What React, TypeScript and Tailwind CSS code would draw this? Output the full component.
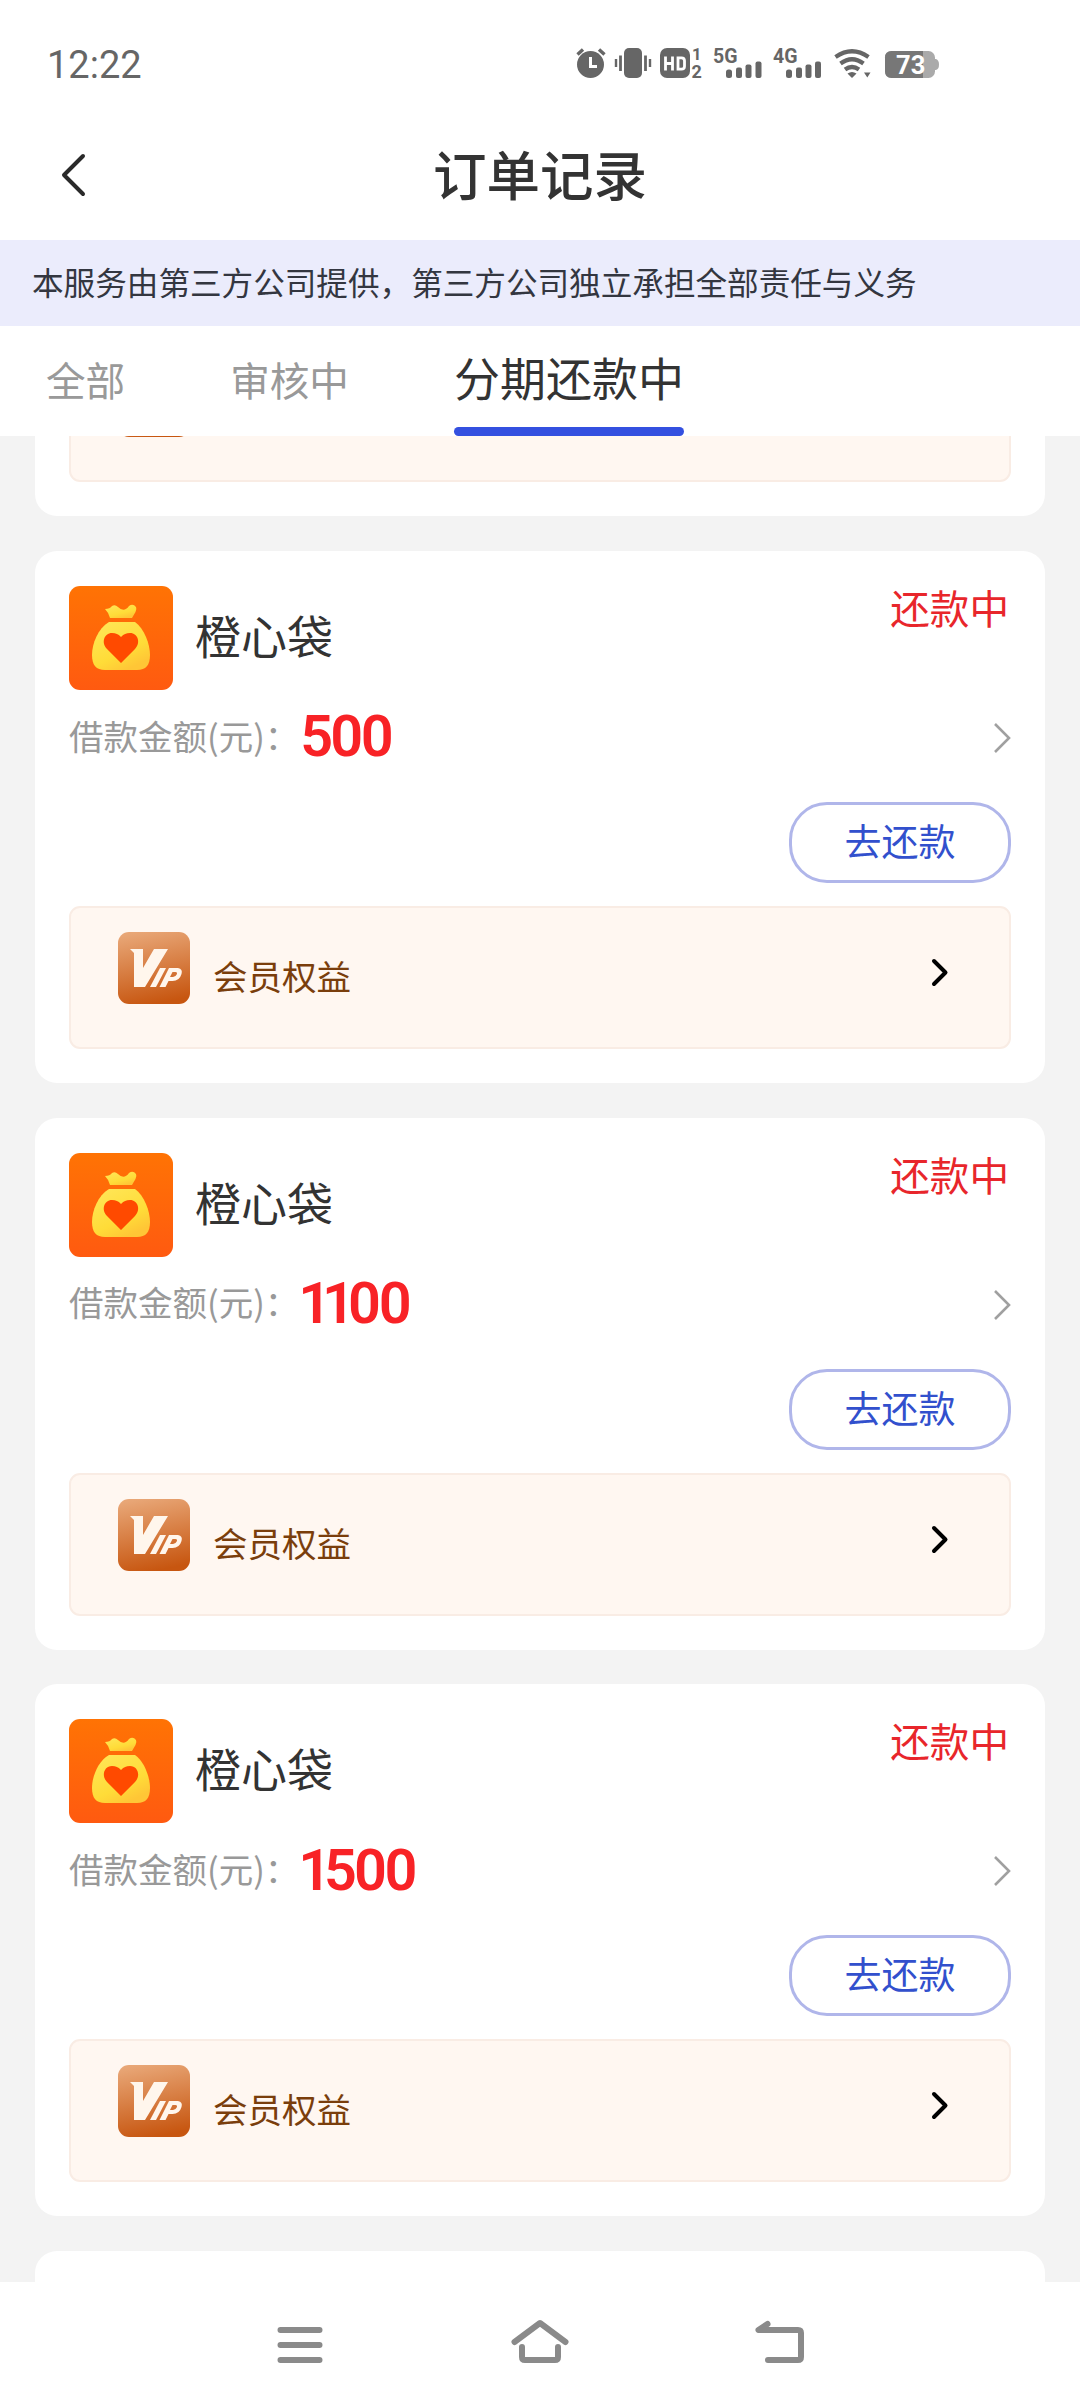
import { ReactNode } from "react";

const orders = [
  { id: 1, name: "橙心袋", amount: "500", status: "还款中" },
  { id: 2, name: "橙心袋", amount: "500", status: "还款中" },
  { id: 3, name: "橙心袋", amount: "1100", status: "还款中" },
  { id: 4, name: "橙心袋", amount: "1500", status: "还款中" },
  { id: 5, name: "橙心袋", amount: "500", status: "还款中" },
];

const tabs = ["全部", "审核中", "分期还款中"];

function StatusIcons() {
  return (
    <svg width="370" height="40" viewBox="0 0 370 40" fill="#666">
      {/* alarm */}
      <circle cx="16.5" cy="19.5" r="13.5" />
      <path d="M3.5 9.5 9 4.5M30.5 9.5 25 4.5" stroke="#666" strokeWidth="3.4" />
      <path d="M16.5 12v9.5h6.5" fill="none" stroke="#fff" strokeWidth="3" />
      {/* vibrate */}
      <rect x="50" y="3" width="18" height="30" rx="5" />
      <path d="M46.5 10.5v15.5M71.5 10.5v15.5" stroke="#666" strokeWidth="2.8" />
      <path d="M42 14v8M76 14v8" stroke="#666" strokeWidth="2.4" />
      {/* hd */}
      <rect x="86" y="3" width="30" height="30" rx="7" />
      <path d="M91.5 11.5v14M98.5 11.5v14M91.5 18.5h7" fill="none" stroke="#fff" strokeWidth="2.8" />
      <path d="M104 12.8h3.5q3 0 3 3v5.4q0 3-3 3H104z" fill="none" stroke="#fff" strokeWidth="2.8" />
      <text x="118" y="14.5" fontSize="16.5" fontWeight="700" fontFamily="Roboto, sans-serif">1</text>
      <text x="117.5" y="32.5" fontSize="18" fontWeight="700" fontFamily="Roboto, sans-serif">2</text>
      {/* sim 1 */}
      <text x="139" y="17.5" fontSize="19.5" fontWeight="700" fontFamily="Roboto, sans-serif">5G</text>
      <rect x="152" y="24.5" width="6" height="8.5" rx="2.5" />
      <rect x="162" y="22.5" width="6" height="10.5" rx="2" />
      <rect x="171.5" y="19.5" width="6" height="13.5" rx="2" />
      <rect x="181.5" y="16.5" width="6" height="16.5" rx="2" />
      {/* sim 2 */}
      <text x="199" y="17.5" fontSize="19.5" fontWeight="700" fontFamily="Roboto, sans-serif">4G</text>
      <rect x="212" y="24.5" width="6" height="8.5" rx="2.5" />
      <rect x="222" y="22.5" width="6" height="10.5" rx="2" />
      <rect x="231.5" y="19.5" width="6" height="13.5" rx="2" />
      <rect x="241" y="16.5" width="6" height="16.5" rx="2" />
      {/* wifi */}
      <g fill="none" stroke="#666" strokeWidth="4.2">
        <path d="M261.5 12q16.5-11.5 33 0" />
        <path d="M266.5 18.5q11.5-8.5 23 0" />
        <path d="M271 24.5q7-5 14 0" />
      </g>
      <path d="M273.5 28.5q4.5-3 9 0L278 33zM290 27.5h6.5l-3.2 5z" />
      {/* battery */}
      <rect x="311" y="6" width="50" height="27" rx="6.5" fill="#aaa" />
      <path d="M360 14h2q3 1 3 5.5t-3 5.5h-2z" fill="#aaa" />
      <path d="M317.5 6H349v27h-31.5q-6.5 0-6.5-6.5v-14q0-6.5 6.5-6.5z" fill="#777" />
      <text x="322" y="28.5" fontSize="25.5" fontWeight="700" fill="#fff" fontFamily="Roboto, sans-serif">73</text>
    </svg>
  );
}

function MoneyBag() {
  return (
    <svg width="104" height="104" viewBox="0 0 104 104">
      <defs>
        <linearGradient id="bagBg" x1="0" y1="0" x2="0" y2="1">
          <stop offset="0" stopColor="#ff7304" />
          <stop offset="1" stopColor="#ff5a10" />
        </linearGradient>
        <linearGradient id="bagFill" x1="0" y1="0" x2="0.6" y2="1">
          <stop offset="0" stopColor="#ffe75a" />
          <stop offset="0.7" stopColor="#ffdc38" />
          <stop offset="1" stopColor="#ffc636" />
        </linearGradient>
      </defs>
      <rect width="104" height="104" rx="11" fill="url(#bagBg)" />
      <path d="M36 23q5 0 7-3 3-2 6 1 6 6 11-1 4-3 7 1 1 2-.5 5L63 32H41q-1-5-5-9z" fill="url(#bagFill)" />
      <path d="M40 36h26c9 6 15 22 15 33 0 10-4 15-13 15H36c-9 0-13-5-13-15 0-11 6-27 17-33z" fill="url(#bagFill)" />
      <path d="M52 77 38 63c-6-6-3-16 5-16 4 0 6 1 9 4 3-3 5-4 9-4 8 0 11 10 5 16z" fill="#ff4a00" />
    </svg>
  );
}

function VipIcon() {
  return (
    <svg width="72" height="72" viewBox="0 0 72 72">
      <defs>
        <linearGradient id="vipBg" x1="0.3" y1="0" x2="0.5" y2="1">
          <stop offset="0" stopColor="#e8a676" />
          <stop offset="1" stopColor="#c75610" />
        </linearGradient>
      </defs>
      <rect width="72" height="72" rx="11" fill="url(#vipBg)" />
      <g fill="#fff6ec">
        <path d="M12 17h13v19l11-19h14L27 55H16V21z" />
        <path d="M42 36h6L38 55h-6z" />
        <path fillRule="evenodd" d="M51 36h9q5 1 3.5 6-2 7-9 7h-4l-3 6h-6zM54.5 40l-2.5 5h3q3-.5 4-3 .5-2-1.5-2z" />
      </g>
    </svg>
  );
}

function OrderCard({ name, amount, status }: { name: string; amount: string; status: string }) {
  return (
    <div className="h-[532px] shrink-0 rounded-[22px] bg-white px-[34px] pt-[35px]">
      <div className="flex h-[104px] items-start">
        <MoneyBag />
        <span className="ml-[22px] mt-[14px] text-[46px] leading-[68px] text-[#333]">{name}</span>
        <span className="-mt-[8px] ml-auto mr-[2px] text-[39.6px] leading-[58px] text-[#e8262b]">{status}</span>
      </div>
      <div className="flex h-[96px] items-center">
        <span className="-mt-[5px] whitespace-nowrap text-[34.5px] text-[#999]">借款金额(元)：</span>
        <span className="-mt-px ml-px font-[Roboto,sans-serif] text-[57.5px] font-semibold proportional-nums tracking-[-3.4px] text-[#f82226]">
          {amount}
        </span>
        <svg className="ml-auto" width="17" height="30" viewBox="0 0 17 30" fill="none" stroke="#a0a0a0" strokeWidth="2.6">
          <path d="M1 1l14 14L1 29" />
        </svg>
      </div>
      <div className="mt-4 flex justify-end">
        <button className="h-[81px] w-[222px] rounded-[38px] border-[3px] border-[#b0b6ea] pb-[5px] text-[37px] leading-[54px] text-[#3250cd]">
          去还款
        </button>
      </div>
      <div className="mt-[23px] flex h-[143px] items-start rounded-[11px] border-2 border-[#f9ece4] bg-[#fff7f1] pl-[47px] pr-[60px] pt-6">
        <VipIcon />
        <span className="ml-[23px] mt-[17px] text-[34.5px] leading-[52px] text-[#7a3e0c]">会员权益</span>
        <svg className="ml-auto mt-[26px]" width="19" height="29" viewBox="0 0 19 29" fill="none" stroke="#000" strokeWidth="4" strokeLinecap="round" strokeLinejoin="round">
          <path d="M4 3l11.5 11.5L4 26" />
        </svg>
      </div>
    </div>
  );
}

function NavButton({ label, children }: { label: string; children: ReactNode }) {
  return (
    <button aria-label={label} className="flex w-[240px] justify-center">
      <svg width="60" height="50" viewBox="0 0 60 50" fill="none" stroke="#8a8a8a" strokeWidth="6" strokeLinecap="round" strokeLinejoin="round">
        {children}
      </svg>
    </button>
  );
}

export default function App() {
  return (
    <div className="flex h-[2408px] w-[1080px] flex-col overflow-hidden bg-[#f3f3f3] font-['Noto_Sans_CJK_SC',sans-serif]">
      {/* Status bar */}
      <div className="flex h-[110px] shrink-0 items-start bg-white pl-[47px] pt-[42px]">
        <span className="w-[527px] font-[Roboto,sans-serif] text-[38px] leading-[46px] text-[#666]">12:22</span>
        <div className="mt-[3px]">
          <StatusIcons />
        </div>
      </div>

      {/* Title bar */}
      <div className="grid h-[130px] shrink-0 grid-cols-[1fr_auto_1fr] bg-white">
        <svg className="ml-[60px] mt-[42px]" width="28" height="46" viewBox="0 0 28 46" fill="none" stroke="#2a2a2a" strokeWidth="4" strokeLinecap="round" strokeLinejoin="round">
          <path d="M23 4 4 23l19 19" />
        </svg>
        <h1 className="mt-[23px] text-[53.5px] font-medium leading-[80px] text-[#333]">订单记录</h1>
      </div>

      <div className="flex h-[86px] shrink-0 items-center bg-[#ebecfc] pb-[2px] pl-8 text-[31.6px] text-[#333640]">
        本服务由第三方公司提供，第三方公司独立承担全部责任与义务
      </div>

      {/* Tabs */}
      <div className="flex h-[110px] shrink-0 gap-[105px] bg-white pl-[46px]">
        {tabs.map((tab, i) =>
          i === 2 ? (
            <div key={tab} className="flex flex-col justify-between">
              <span className="mt-[16px] text-[46px] leading-[68px] text-[#333]">{tab}</span>
              <span className="h-[9px] rounded-full bg-[#3450e0]" />
            </div>
          ) : (
            <span key={tab} className="mt-[23px] h-[60px] text-[39.6px] leading-[60px] text-[#999]">
              {tab}
            </span>
          )
        )}
      </div>

      {/* Order list, scrolled past the first card */}
      <div className="h-[1846px] shrink-0 overflow-hidden px-[35px]">
        <div className="-mt-[451.67px] flex flex-col gap-[34.67px]">
          {orders.map((order) => (
            <OrderCard key={order.id} name={order.name} amount={order.amount} status={order.status} />
          ))}
        </div>
      </div>

      {/* System navigation */}
      <div className="flex h-[126px] shrink-0 justify-center bg-white pt-[36px]">
        <NavButton label="menu">
          <path d="M10.5 12h39M10.5 27h39M10.5 42h39" />
        </NavButton>
        <NavButton label="home">
          <path d="M4.5 24 30 5l25.5 19" />
          <path d="M12 29v10q0 3 3 3h30q3 0 3-3V29" />
        </NavButton>
        <NavButton label="back">
          <path d="M17.5 6 8.5 12H48q3 0 3 3v24q0 3-3 3H18" />
        </NavButton>
      </div>
    </div>
  );
}
